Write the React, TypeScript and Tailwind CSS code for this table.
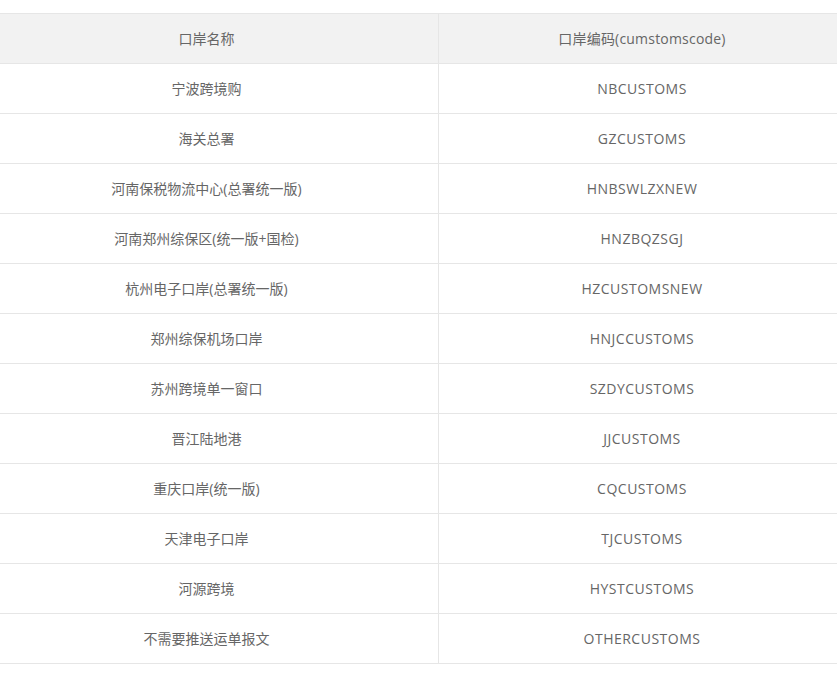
const rows: [string, string][] = [
  ["宁波跨境购", "NBCUSTOMS"],
  ["海关总署", "GZCUSTOMS"],
  ["河南保税物流中心(总署统一版)", "HNBSWLZXNEW"],
  ["河南郑州综保区(统一版+国检)", "HNZBQZSGJ"],
  ["杭州电子口岸(总署统一版)", "HZCUSTOMSNEW"],
  ["郑州综保机场口岸", "HNJCCUSTOMS"],
  ["苏州跨境单一窗口", "SZDYCUSTOMS"],
  ["晋江陆地港", "JJCUSTOMS"],
  ["重庆口岸(统一版)", "CQCUSTOMS"],
  ["天津电子口岸", "TJCUSTOMS"],
  ["河源跨境", "HYSTCUSTOMS"],
  ["不需要推送运单报文", "OTHERCUSTOMS"],
];

export default function App() {
  return (
    <div
      className="min-h-screen bg-white pt-[13px] text-[14px] text-[#666]"
      style={{ fontFamily: '"Open Sans", "Noto Sans CJK SC", sans-serif' }}
    >
      <div className="border-t border-[#e6e6e6]">
        <div className="grid grid-cols-[439px_1fr] bg-[#f2f2f2] border-b border-[#e6e6e6]">
          <div className="h-[49px] flex items-center justify-center pr-[25px] border-r border-[#e6e6e6]">
            口岸名称
          </div>
          <div className="h-[49px] flex items-center justify-center pl-[8px] tracking-[0.2px]">
            口岸编码(cumstomscode)
          </div>
        </div>
        {rows.map(([name, code]) => (
          <div key={code} className="grid grid-cols-[439px_1fr] border-b border-[#e6e6e6]">
            <div className="h-[49px] flex items-center justify-center pr-[25px] border-r border-[#e6e6e6]">
              {name}
            </div>
            <div className="h-[49px] flex items-center justify-center pl-[8px] tracking-[0.5px]">
              {code}
            </div>
          </div>
        ))}
      </div>
    </div>
  );
}
